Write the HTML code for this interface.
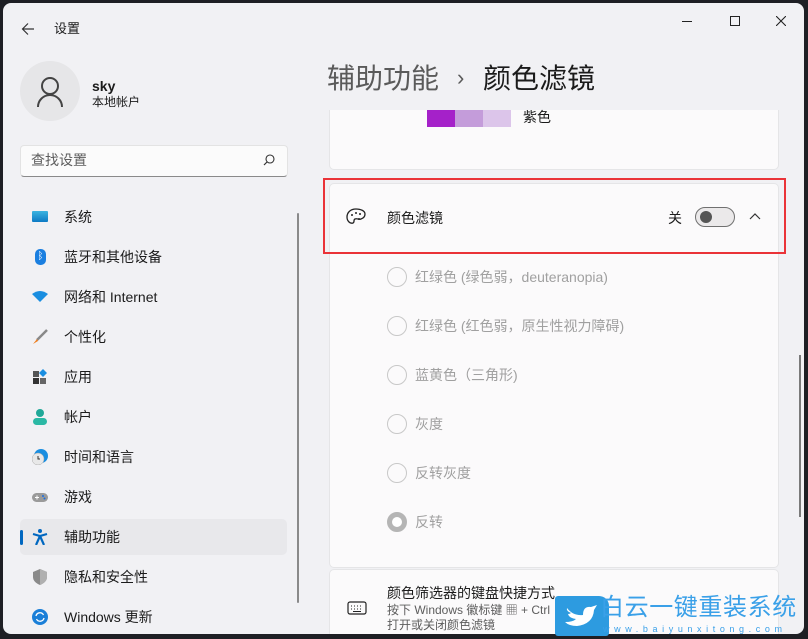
<!DOCTYPE html>
<html><head><meta charset="utf-8"><style>
*{margin:0;padding:0;box-sizing:border-box}
body{width:808px;height:639px;background:#1e1f24;position:relative;overflow:hidden;font-family:"Liberation Sans","Noto Sans CJK SC",sans-serif;color:#1b1b1b}
.win{position:absolute;left:3px;top:3px;width:801px;height:631px;background:#f1f1f4;border-radius:8px;overflow:hidden}
.a{position:absolute}
.t{position:absolute;font-size:14px;white-space:nowrap;line-height:1}
.nav{position:absolute;left:17px;width:267px;height:36px}
.nav .t{left:44px;top:11px}
.nav .i{position:absolute;left:12px;top:10px;width:16px;height:16px}
.card{position:absolute;left:326px;width:450px;background:#fbfafb;border:1px solid #e5e5e7;border-radius:5px}
.r{position:absolute;left:58px;width:20px;height:20px;border:1px solid #c8c8c8;border-radius:50%}
.rt{position:absolute;left:86px;font-size:14px;color:#a0a0a0;white-space:nowrap;line-height:1}
</style></head><body>
<div class="win">
<svg class="a" style="left:18px;top:19px" width="14" height="14" viewBox="0 0 14 14"><path d="M13 7H1.5M7 1.5L1.5 7 7 12.5" stroke="#333" stroke-width="1.2" fill="none"/></svg>
<div class="t" style="left:51px;top:19px;font-size:13px">设置</div>
<div class="a" style="left:679px;top:18px;width:10px;height:1px;background:#222"></div>
<div class="a" style="left:727px;top:13px;width:10px;height:10px;border:1px solid #222"></div>
<svg class="a" style="left:773px;top:13px" width="10" height="10"><path d="M0 0L10 10M10 0L0 10" stroke="#222" stroke-width="1.1"/></svg>
<div class="a" style="left:17px;top:58px;width:60px;height:60px;border-radius:50%;background:#e6e6e8"></div>
<svg class="a" style="left:33px;top:73px" width="28" height="32" viewBox="0 0 28 32"><circle cx="14" cy="10" r="8" stroke="#444" stroke-width="2" fill="none"/><path d="M2 31a12 12 0 0 1 24 0" stroke="#444" stroke-width="2" fill="none"/></svg>
<div class="t" style="left:89px;top:76px;font-weight:bold;font-size:14px">sky</div>
<div class="t" style="left:89px;top:93px;font-size:12px">本地帐户</div>
<div class="a" style="left:17px;top:142px;width:268px;height:32px;background:#fbfbfb;border:1px solid #e3e3e3;border-bottom-color:#8a8a8a;border-radius:4px"></div>
<div class="t" style="left:28px;top:150px;color:#5d5d5d">查找设置</div>
<svg class="a" style="left:260px;top:151px" width="12" height="12"><circle cx="7" cy="5" r="4" stroke="#333" fill="none" stroke-width="1.1"/><path d="M4 8L1 11" stroke="#333" stroke-width="1.2"/></svg>
<div class="nav" style="top:196px"><div class="i" style="top:12px;height:11px;background:linear-gradient(#3bb4e0,#0d7ac4);border-radius:1px"></div><div class="t">系统</div></div>
<div class="nav" style="top:236px"><div class="i" style="left:15px;width:11px;height:16px;border-radius:5px;background:#1b7fe0;color:#fff;font-size:10px;text-align:center;line-height:16px">ᛒ</div><div class="t">蓝牙和其他设备</div></div>
<div class="nav" style="top:276px"><svg class="i" viewBox="0 0 16 16"><path d="M0 5Q8 -1 16 5L8 13Z" fill="#1a8ee0"/></svg><div class="t">网络和 Internet</div></div>
<div class="nav" style="top:316px"><svg class="i" viewBox="0 0 16 16"><path d="M15 1L5 11" stroke="#888" stroke-width="2.5"/><path d="M5 10L1 15L6 12Z" fill="#f08020"/></svg><div class="t">个性化</div></div>
<div class="nav" style="top:356px"><svg class="i" viewBox="0 0 16 16"><rect x="1" y="2" width="6" height="6" fill="#555"/><rect x="1" y="9" width="6" height="6" fill="#333"/><rect x="8" y="9" width="6" height="6" fill="#666"/><path d="M11 0L15 4L11 8L7 4Z" fill="#1a8ee0"/></svg><div class="t">应用</div></div>
<div class="nav" style="top:396px"><svg class="i" viewBox="0 0 16 16"><circle cx="8" cy="4" r="4" fill="#20a898"/><rect x="1" y="9" width="14" height="7" rx="3.5" fill="#2bb8a4"/></svg><div class="t">帐户</div></div>
<div class="nav" style="top:436px"><svg class="i" viewBox="0 0 16 16"><circle cx="9" cy="7" r="7" fill="#1a8ee0"/><circle cx="6" cy="10" r="6" fill="#e8e8e8" stroke="#aaa" stroke-width=".5"/><path d="M6 7V10H8" stroke="#333" fill="none"/></svg><div class="t">时间和语言</div></div>
<div class="nav" style="top:476px"><svg class="i" viewBox="0 0 16 16"><rect x="0" y="4" width="16" height="9" rx="4.5" fill="#9a9a9a"/><path d="M3 8.5H7M5 6.5V10.5" stroke="#fff"/><circle cx="11" cy="7" r="1" fill="#1a6ee0"/><circle cx="12.5" cy="9.5" r="1" fill="#1a6ee0"/></svg><div class="t">游戏</div></div>
<div class="nav" style="top:516px;background:#e8e8eb;border-radius:5px"><div class="a" style="left:0;top:11px;width:3px;height:15px;background:#0067c0;border-radius:2px"></div><svg class="i" viewBox="0 0 16 16"><circle cx="8" cy="2" r="2" fill="#0067c0"/><path d="M1 5L8 7L15 5M8 7L4 16M8 7L12 16" stroke="#0067c0" stroke-width="2.2" fill="none"/></svg><div class="t">辅助功能</div></div>
<div class="nav" style="top:556px"><svg class="i" viewBox="0 0 16 16"><path d="M8 0L15 3V8Q15 13 8 16Q1 13 1 8V3Z" fill="#8a8a8a"/><path d="M8 0L15 3V8Q15 13 8 16Z" fill="#b0b0b0"/></svg><div class="t">隐私和安全性</div></div>
<div class="nav" style="top:596px"><svg class="i" viewBox="0 0 16 16"><circle cx="8" cy="8" r="8" fill="#1a7fd8"/><path d="M4 7A4 4 0 0 1 11.5 6M12 9A4 4 0 0 1 4.5 10" stroke="#fff" stroke-width="1.3" fill="none"/></svg><div class="t">Windows 更新</div></div>
<div class="a" style="left:294px;top:210px;width:2px;height:390px;background:#8a8a8a;border-radius:1px"></div>
<div class="t" style="left:324px;top:62px;font-size:28px;color:#5a5a5a">辅助功能</div>
<div class="t" style="left:454px;top:64px;font-size:22px;color:#5a5a5a">›</div>
<div class="t" style="left:480px;top:62px;font-size:28px">颜色滤镜</div>
<div class="card" style="border-top:none;border-radius:0 0 5px 5px;top:107px;height:60px"></div>
<div class="a" style="left:424px;top:107px;width:28px;height:17px;background:#a521c9"></div>
<div class="a" style="left:452px;top:107px;width:28px;height:17px;background:#c49cda"></div>
<div class="a" style="left:480px;top:107px;width:28px;height:17px;background:#dcc5ea"></div>
<div class="t" style="left:520px;top:107px">紫色</div>
<div class="card" style="top:180px;height:385px"></div>
<div class="a" style="left:326px;top:250px;width:450px;height:1px;background:#e5e5e7"></div>
<svg class="a" style="left:343px;top:205px" width="20" height="18" viewBox="0 0 20 18"><path d="M10 1C4 1 1 5 1 9c0 4 3 7 6 6 2-1 0-3 2-4s4 1 6 0c3-1 4-3 4-5 0-3-4-5-9-5z" stroke="#222" stroke-width="1.3" fill="none"/><circle cx="6" cy="7" r="1" fill="#222"/><circle cx="10" cy="5" r="1" fill="#222"/><circle cx="14" cy="6" r="1" fill="#222"/><circle cx="13" cy="11" r="1" fill="#222"/></svg>
<div class="t" style="left:384px;top:208px">颜色滤镜</div>
<div class="t" style="left:665px;top:208px">关</div>
<div class="a" style="left:692px;top:204px;width:40px;height:20px;border:1px solid #707070;border-radius:10px;background:#ebe9ea"></div>
<div class="a" style="left:697px;top:208px;width:12px;height:12px;border-radius:50%;background:#555"></div>
<svg class="a" style="left:746px;top:209px" width="12" height="8"><path d="M1 7L6 2L11 7" stroke="#333" stroke-width="1.2" fill="none"/></svg>
<div class="a" style="left:320px;top:175px;width:463px;height:76px;border:2px solid #ea3338"></div>
<div class="card" style="border:none;background:none;top:180px">
<div class="r" style="top:84px"></div><div class="rt" style="top:87px">红绿色 (绿色弱，deuteranopia)</div>
<div class="r" style="top:133px"></div><div class="rt" style="top:136px">红绿色 (红色弱，原生性视力障碍)</div>
<div class="r" style="top:182px"></div><div class="rt" style="top:185px">蓝黄色（三角形)</div>
<div class="r" style="top:231px"></div><div class="rt" style="top:234px">灰度</div>
<div class="r" style="top:280px"></div><div class="rt" style="top:283px">反转灰度</div>
<div class="r" style="top:329px;border:5px solid #b5b5b5;background:#fff"></div><div class="rt" style="top:332px">反转</div>
</div>
<div class="card" style="top:566px;height:80px"></div>
<svg class="a" style="left:344px;top:598px" width="20" height="14"><rect x="1" y="1" width="18" height="12" rx="2" stroke="#222" fill="none" stroke-width="1.2"/><path d="M4 5h1M7 5h1M10 5h1M13 5h1M4 8h1M7 8h1M10 8h1M13 8h1M6 10.5h8" stroke="#222"/></svg>
<div class="t" style="left:384px;top:583px">颜色筛选器的键盘快捷方式</div>
<div class="t" style="left:384px;top:601px;font-size:12px;color:#5d5d5d">按下 Windows 徽标键 ▦ + Ctrl</div>
<div class="t" style="left:384px;top:616px;font-size:12px;color:#5d5d5d">打开或关闭颜色滤镜</div>
<div class="a" style="left:796px;top:352px;width:2px;height:162px;background:#7a7a7a"></div>
</div>
<div class="a" style="left:555px;top:596px;width:54px;height:40px;background:#2d9be0;border-radius:3px 10px 3px 3px"></div>
<svg class="a" style="left:563px;top:602px" width="38" height="28" viewBox="0 0 38 28"><path d="M4 6Q10 14 20 13Q20 4 28 5L34 3L31 8Q30 22 14 24Q6 24 2 20Q10 20 13 17Q6 16 5 12Q7 12 8 11Q3 9 4 6Z" fill="#fff"/></svg>
<div class="t" style="left:600px;top:596px;font-size:24px;color:#3aa0e8;letter-spacing:0.6px">白云一键重装系统</div>
<div class="t" style="left:603px;top:625px;font-size:9px;color:#3aa0e8;letter-spacing:4.6px">www.baiyunxitong.com</div>
</body></html>
